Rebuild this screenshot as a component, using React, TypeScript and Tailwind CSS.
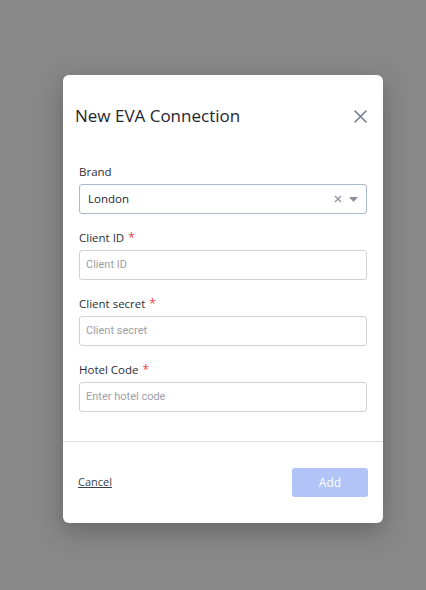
import React from "react";

function Field({ label, placeholder }: { label: string; placeholder: string }) {
  return (
    <div className="flex flex-col">
      <div className="h-[16px] flex items-center text-[11.5px] text-[#2a2f3a] font-['Open_Sans',sans-serif] leading-[16px]">
        {label}
        <span className="ml-[4px] text-[#ef4444] text-[12px]">*</span>
      </div>
      <div className="mt-[4px] h-[30px] rounded-[3px] border border-[#cfd1d6] bg-white flex items-center px-[6px]">
        <span className="text-[11px] text-[#9ca0a8] font-['Roboto',sans-serif]">{placeholder}</span>
      </div>
    </div>
  );
}

export default function App() {
  return (
    <div className="min-h-[590px] w-full bg-[#888888] pt-[75px] pl-[63px]">
      <div className="w-[320px] h-[448px] bg-white rounded-[6px] shadow-[0_8px_24px_rgba(0,0,0,0.25)] flex flex-col font-['Open_Sans',sans-serif]">
        <div className="pt-[29px] px-[12px] pr-[16px] flex items-center justify-between">
          <div className="text-[17px] leading-[24px] text-[#1f2530]">New EVA Connection</div>
          <svg width="14" height="14" viewBox="0 0 14 14">
            <path d="M2 2L13 13M13 2L2 13" stroke="#6b7a90" strokeWidth="1.5" strokeLinecap="round" />
          </svg>
        </div>
        <div className="px-[16px] pt-[36px] flex flex-col gap-[16px]">
          <div className="flex flex-col">
            <div className="h-[16px] flex items-center text-[11.5px] text-[#2a2f3a] leading-[16px]">Brand</div>
            <div className="mt-[4px] h-[30px] rounded-[3px] border border-[#aab8cc] bg-white flex items-center pl-[8px] pr-[8px]">
              <span className="text-[11.5px] text-[#1f2530] flex-1">London</span>
              <svg width="8" height="8" viewBox="0 0 8 8" className="mr-[7px]">
                <path d="M1 1L7 7M7 1L1 7" stroke="#8a8f98" strokeWidth="1.2" />
              </svg>
              <svg width="9" height="5" viewBox="0 0 9 5">
                <path d="M0 0H9L4.5 5Z" fill="#8a8f98" />
              </svg>
            </div>
          </div>
          <Field label="Client ID" placeholder="Client ID" />
          <Field label="Client secret" placeholder="Client secret" />
          <Field label="Hotel Code" placeholder="Enter hotel code" />
        </div>
        <div className="mt-[29px] h-px bg-[#dcdde0]" />
        <div className="flex-1 flex items-center justify-between pl-[15px] pr-[15px]">
          <span className="text-[11px] text-[#3a3f48] underline">Cancel</span>
          <div className="w-[76px] h-[29px] rounded-[3px] bg-[#b0c4f8] flex items-center justify-center text-[12px] text-white">Add</div>
        </div>
      </div>
    </div>
  );
}
